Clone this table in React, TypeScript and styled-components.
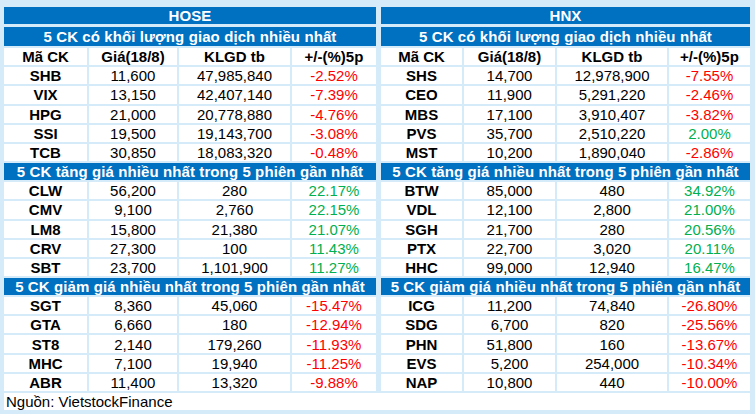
import React from "react";
import styled, { createGlobalStyle } from "styled-components";

const GlobalStyle = createGlobalStyle`
  html, body {
    margin: 0;
    padding: 0;
    background: #d5ebfa;
  }
  body {
    font-family: "Liberation Sans", Arial, sans-serif;
  }
`;

type Row = [string, string, string, string];

const hose = {
  title: "HOSE",
  cols: "83fr 88fr 111fr 84fr",
  volume: [
    ["SHB", "11,600", "47,985,840", "-2.52%"],
    ["VIX", "13,150", "42,407,140", "-7.39%"],
    ["HPG", "21,000", "20,778,880", "-4.76%"],
    ["SSI", "19,500", "19,143,700", "-3.08%"],
    ["TCB", "30,850", "18,083,320", "-0.48%"],
  ] as Row[],
  gainers: [
    ["CLW", "56,200", "280", "22.17%"],
    ["CMV", "9,100", "2,760", "22.15%"],
    ["LM8", "15,800", "21,380", "21.07%"],
    ["CRV", "27,300", "100", "11.43%"],
    ["SBT", "23,700", "1,101,900", "11.27%"],
  ] as Row[],
  losers: [
    ["SGT", "8,360", "45,060", "-15.47%"],
    ["GTA", "6,660", "180", "-12.94%"],
    ["ST8", "2,140", "179,260", "-11.93%"],
    ["MHC", "7,100", "19,940", "-11.25%"],
    ["ABR", "11,400", "13,320", "-9.88%"],
  ] as Row[],
};

const hnx = {
  title: "HNX",
  cols: "81fr 91fr 110fr 81fr",
  volume: [
    ["SHS", "14,700", "12,978,900", "-7.55%"],
    ["CEO", "11,900", "5,291,220", "-2.46%"],
    ["MBS", "17,100", "3,910,407", "-3.82%"],
    ["PVS", "35,700", "2,510,220", "2.00%"],
    ["MST", "10,200", "1,890,040", "-2.86%"],
  ] as Row[],
  gainers: [
    ["BTW", "85,000", "480", "34.92%"],
    ["VDL", "12,100", "2,800", "21.00%"],
    ["SGH", "21,700", "280", "20.56%"],
    ["PTX", "22,700", "3,020", "20.11%"],
    ["HHC", "99,000", "12,940", "16.47%"],
  ] as Row[],
  losers: [
    ["ICG", "11,200", "74,840", "-26.80%"],
    ["SDG", "6,700", "820", "-25.56%"],
    ["PHN", "51,800", "160", "-13.67%"],
    ["EVS", "5,200", "254,000", "-10.34%"],
    ["NAP", "10,800", "440", "-10.00%"],
  ] as Row[],
};

const Page = styled.div`
  width: 755px;
  height: 414px;
  box-sizing: border-box;
  padding: 7px 5px 5px 4px;
  display: flex;
  flex-direction: column;
  gap: 2px;
  background: #d5ebfa;
`;

const Panels = styled.div`
  display: grid;
  grid-template-columns: 372fr 369fr;
  gap: 5px;
`;

const Panel = styled.div`
  display: flex;
  flex-direction: column;
  gap: 2px;
`;

const Bar = styled.div<{ $h?: number; $after?: number }>`
  height: ${(p) => p.$h ?? 17}px;
  margin-bottom: ${(p) => p.$after ?? 0}px;
  background: #0070c0;
  color: #ffffff;
  font-weight: 700;
  font-size: 15px;
  display: flex;
  align-items: center;
  justify-content: center;
  white-space: nowrap;
  letter-spacing: 0.1px;
`;

const GridRow = styled.div<{ $cols: string }>`
  display: grid;
  grid-template-columns: ${(p) => p.$cols};
  gap: 2px;
`;

const Cell = styled.div<{ $bold?: boolean; $tone?: "up" | "down" }>`
  height: 17.2px;
  background: #ffffff;
  font-size: 15px;
  font-weight: ${(p) => (p.$bold ? 700 : 400)};
  color: ${(p) =>
    p.$tone === "up" ? "#00b050" : p.$tone === "down" ? "#ff0000" : "#000000"};
  display: flex;
  align-items: center;
  justify-content: center;
  white-space: nowrap;
`;

const Footer = styled.div`
  height: 17px;
  background: #ffffff;
  font-size: 15px;
  color: #000000;
  display: flex;
  align-items: center;
  padding-left: 2px;
`;

const DataRows = ({ rows, cols }: { rows: Row[]; cols: string }) => (
  <>
    {rows.map((r) => (
      <GridRow key={r[0]} $cols={cols}>
        <Cell $bold>{r[0]}</Cell>
        <Cell>{r[1]}</Cell>
        <Cell>{r[2]}</Cell>
        <Cell $tone={r[3].startsWith("-") ? "down" : "up"}>{r[3]}</Cell>
      </GridRow>
    ))}
  </>
);

const Market = ({ data }: { data: typeof hose }) => (
  <Panel>
    <Bar $after={1}>{data.title}</Bar>
    <Bar $h={19}>5 CK có khối lượng giao dịch nhiều nhất</Bar>
    <GridRow $cols={data.cols}>
      <Cell $bold>Mã CK</Cell>
      <Cell $bold>Giá(18/8)</Cell>
      <Cell $bold>KLGD tb</Cell>
      <Cell $bold>+/-(%)5p</Cell>
    </GridRow>
    <DataRows rows={data.volume} cols={data.cols} />
    <Bar>5 CK tăng giá nhiều nhất trong 5 phiên gần nhất</Bar>
    <DataRows rows={data.gainers} cols={data.cols} />
    <Bar>5 CK giảm giá nhiều nhất trong 5 phiên gần nhất</Bar>
    <DataRows rows={data.losers} cols={data.cols} />
  </Panel>
);

export default function App() {
  return (
    <>
      <GlobalStyle />
      <Page>
        <Panels>
          <Market data={hose} />
          <Market data={hnx} />
        </Panels>
        <Footer>Nguồn: VietstockFinance</Footer>
      </Page>
    </>
  );
}
